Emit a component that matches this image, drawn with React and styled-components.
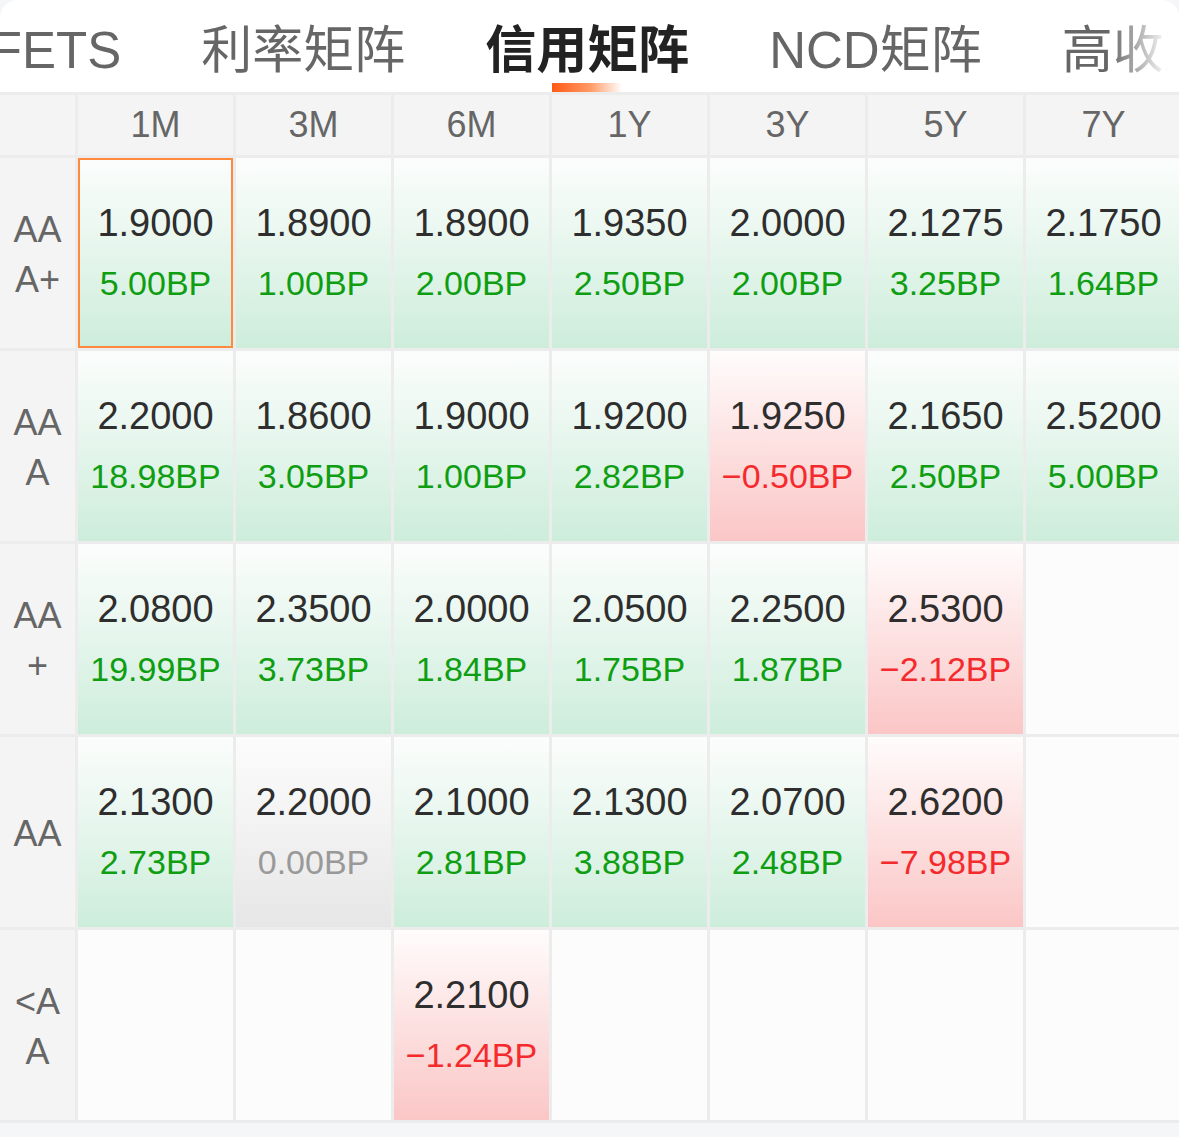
import React, { useLayoutEffect, useRef } from "react";
import styled, { createGlobalStyle, css } from "styled-components";

const GlobalStyle = createGlobalStyle`
  html, body {
    margin: 0;
    padding: 0;
    background: #f5f6f8;
    font-family: "Liberation Sans", "Noto Sans CJK SC", sans-serif;
  }
  * { box-sizing: border-box; }
`;

const Page = styled.div`
  width: 1179px;
  background: #f5f6f8;
  padding-bottom: 12px;
`;

const TabBar = styled.div`
  position: relative;
  height: 92px;
  background: #ffffff;
  border-radius: 18px 18px 0 0;
  overflow: hidden;
`;

const TabStrip = styled.div`
  display: flex;
  height: 100%;
  overflow-x: auto;
  scrollbar-width: none;
  &::-webkit-scrollbar { display: none; }
`;

const Tab = styled.div`
  position: relative;
  flex: 0 0 auto;
  display: flex;
  align-items: center;
  padding: 8px 40px 0;
  height: 100%;
  font-size: 51px;
  line-height: 1;
  white-space: nowrap;
  color: ${(p) => (p.$active ? "#222222" : "#666666")};
  font-weight: ${(p) => (p.$active ? 700 : 400)};
  ${(p) =>
    p.$active &&
    css`
      &::after {
        content: "";
        position: absolute;
        left: 50%;
        bottom: 0;
        width: 70px;
        height: 9px;
        transform: translateX(-50%);
        background: linear-gradient(90deg, #ff5a14 0%, #ff9a66 55%, rgba(255, 255, 255, 0.9) 100%);
      }
    `}
`;

const Fade = styled.div`
  position: absolute;
  top: 0;
  right: 0;
  width: 70px;
  height: 100%;
  pointer-events: none;
  background: linear-gradient(90deg, rgba(255, 255, 255, 0) 0%, #ffffff 85%);
`;

const Grid = styled.div`
  display: grid;
  grid-template-columns: 75px repeat(7, 155px);
  grid-template-rows: 60px repeat(5, 190px);
  gap: 3px;
  padding: 3px 0;
  background: #ececec;
  overflow: hidden;
`;

const HeadCell = styled.div`
  display: flex;
  align-items: center;
  justify-content: center;
  background: #f4f4f4;
  color: #666666;
  font-size: 36px;
`;

const LabelCell = styled.div`
  display: flex;
  align-items: center;
  justify-content: center;
  padding: 4px 6px 0;
  background: #f4f4f4;
  color: #666666;
  font-size: 36px;
  line-height: 50px;
  text-align: center;
  word-break: break-all;
`;

const tones = {
  up: "linear-gradient(180deg, #fbfdfc 0%, #ecf8f1 35%, #cdeddb 100%)",
  down: "linear-gradient(180deg, #fffcfc 0%, #fde6e6 40%, #fbc6c6 100%)",
  flat: "linear-gradient(180deg, #fcfcfc 0%, #f3f3f3 45%, #e6e6e6 100%)",
  empty: "#fcfcfc",
};

const changeColors = {
  up: "#0f9e12",
  down: "#f42a2d",
  flat: "#999999",
};

const Cell = styled.div`
  display: flex;
  flex-direction: column;
  align-items: center;
  justify-content: center;
  background: ${(p) => tones[p.$tone]};
  box-shadow: ${(p) => (p.$selected ? "inset 0 0 0 2px #ff8a3d" : "none")};
`;

const Value = styled.div`
  font-size: 38px;
  line-height: 60px;
  color: #2e2e2e;
`;

const Change = styled.div`
  font-size: 34px;
  line-height: 60px;
  color: ${(p) => changeColors[p.$tone]};
`;

const tabs = ["CFETS", "利率矩阵", "信用矩阵", "NCD矩阵", "高收益"];
const terms = ["1M", "3M", "6M", "1Y", "3Y", "5Y", "7Y"];

const rows = [
  {
    label: "AAA+",
    cells: [
      ["1.9000", "5.00"],
      ["1.8900", "1.00"],
      ["1.8900", "2.00"],
      ["1.9350", "2.50"],
      ["2.0000", "2.00"],
      ["2.1275", "3.25"],
      ["2.1750", "1.64"],
    ],
  },
  {
    label: "AAA",
    cells: [
      ["2.2000", "18.98"],
      ["1.8600", "3.05"],
      ["1.9000", "1.00"],
      ["1.9200", "2.82"],
      ["1.9250", "-0.50"],
      ["2.1650", "2.50"],
      ["2.5200", "5.00"],
    ],
  },
  {
    label: "AA+",
    cells: [
      ["2.0800", "19.99"],
      ["2.3500", "3.73"],
      ["2.0000", "1.84"],
      ["2.0500", "1.75"],
      ["2.2500", "1.87"],
      ["2.5300", "-2.12"],
      null,
    ],
  },
  {
    label: "AA",
    cells: [
      ["2.1300", "2.73"],
      ["2.2000", "0.00"],
      ["2.1000", "2.81"],
      ["2.1300", "3.88"],
      ["2.0700", "2.48"],
      ["2.6200", "-7.98"],
      null,
    ],
  },
  {
    label: "<AA",
    cells: [null, null, ["2.2100", "-1.24"], null, null, null, null],
  },
];

function toneOf(change) {
  const n = parseFloat(change);
  if (n > 0) return "up";
  if (n < 0) return "down";
  return "flat";
}

function fmt(change) {
  return change.startsWith("-") ? "\u2212" + change.slice(1) + "BP" : change + "BP";
}

export default function App() {
  const stripRef = useRef(null);
  const tabRefs = useRef([]);

  useLayoutEffect(() => {
    const strip = stripRef.current;
    const second = tabRefs.current[1];
    if (strip && second) {
      strip.scrollLeft = second.offsetLeft - 161;
    }
  }, []);

  return (
    <Page>
      <GlobalStyle />
      <TabBar>
        <TabStrip ref={stripRef}>
          {tabs.map((t, i) => (
            <Tab key={t} $active={i === 2} ref={(el) => (tabRefs.current[i] = el)}>
              {t}
            </Tab>
          ))}
        </TabStrip>
        <Fade />
      </TabBar>
      <Grid>
        <HeadCell />
        {terms.map((t) => (
          <HeadCell key={t}>{t}</HeadCell>
        ))}
        {rows.map((row, ri) => (
          <React.Fragment key={row.label}>
            <LabelCell>{row.label}</LabelCell>
            {row.cells.map((c, ci) => {
              if (!c) return <Cell key={ci} $tone="empty" />;
              const tone = toneOf(c[1]);
              return (
                <Cell key={ci} $tone={tone} $selected={ri === 0 && ci === 0}>
                  <Value>{c[0]}</Value>
                  <Change $tone={tone}>{fmt(c[1])}</Change>
                </Cell>
              );
            })}
          </React.Fragment>
        ))}
      </Grid>
    </Page>
  );
}
